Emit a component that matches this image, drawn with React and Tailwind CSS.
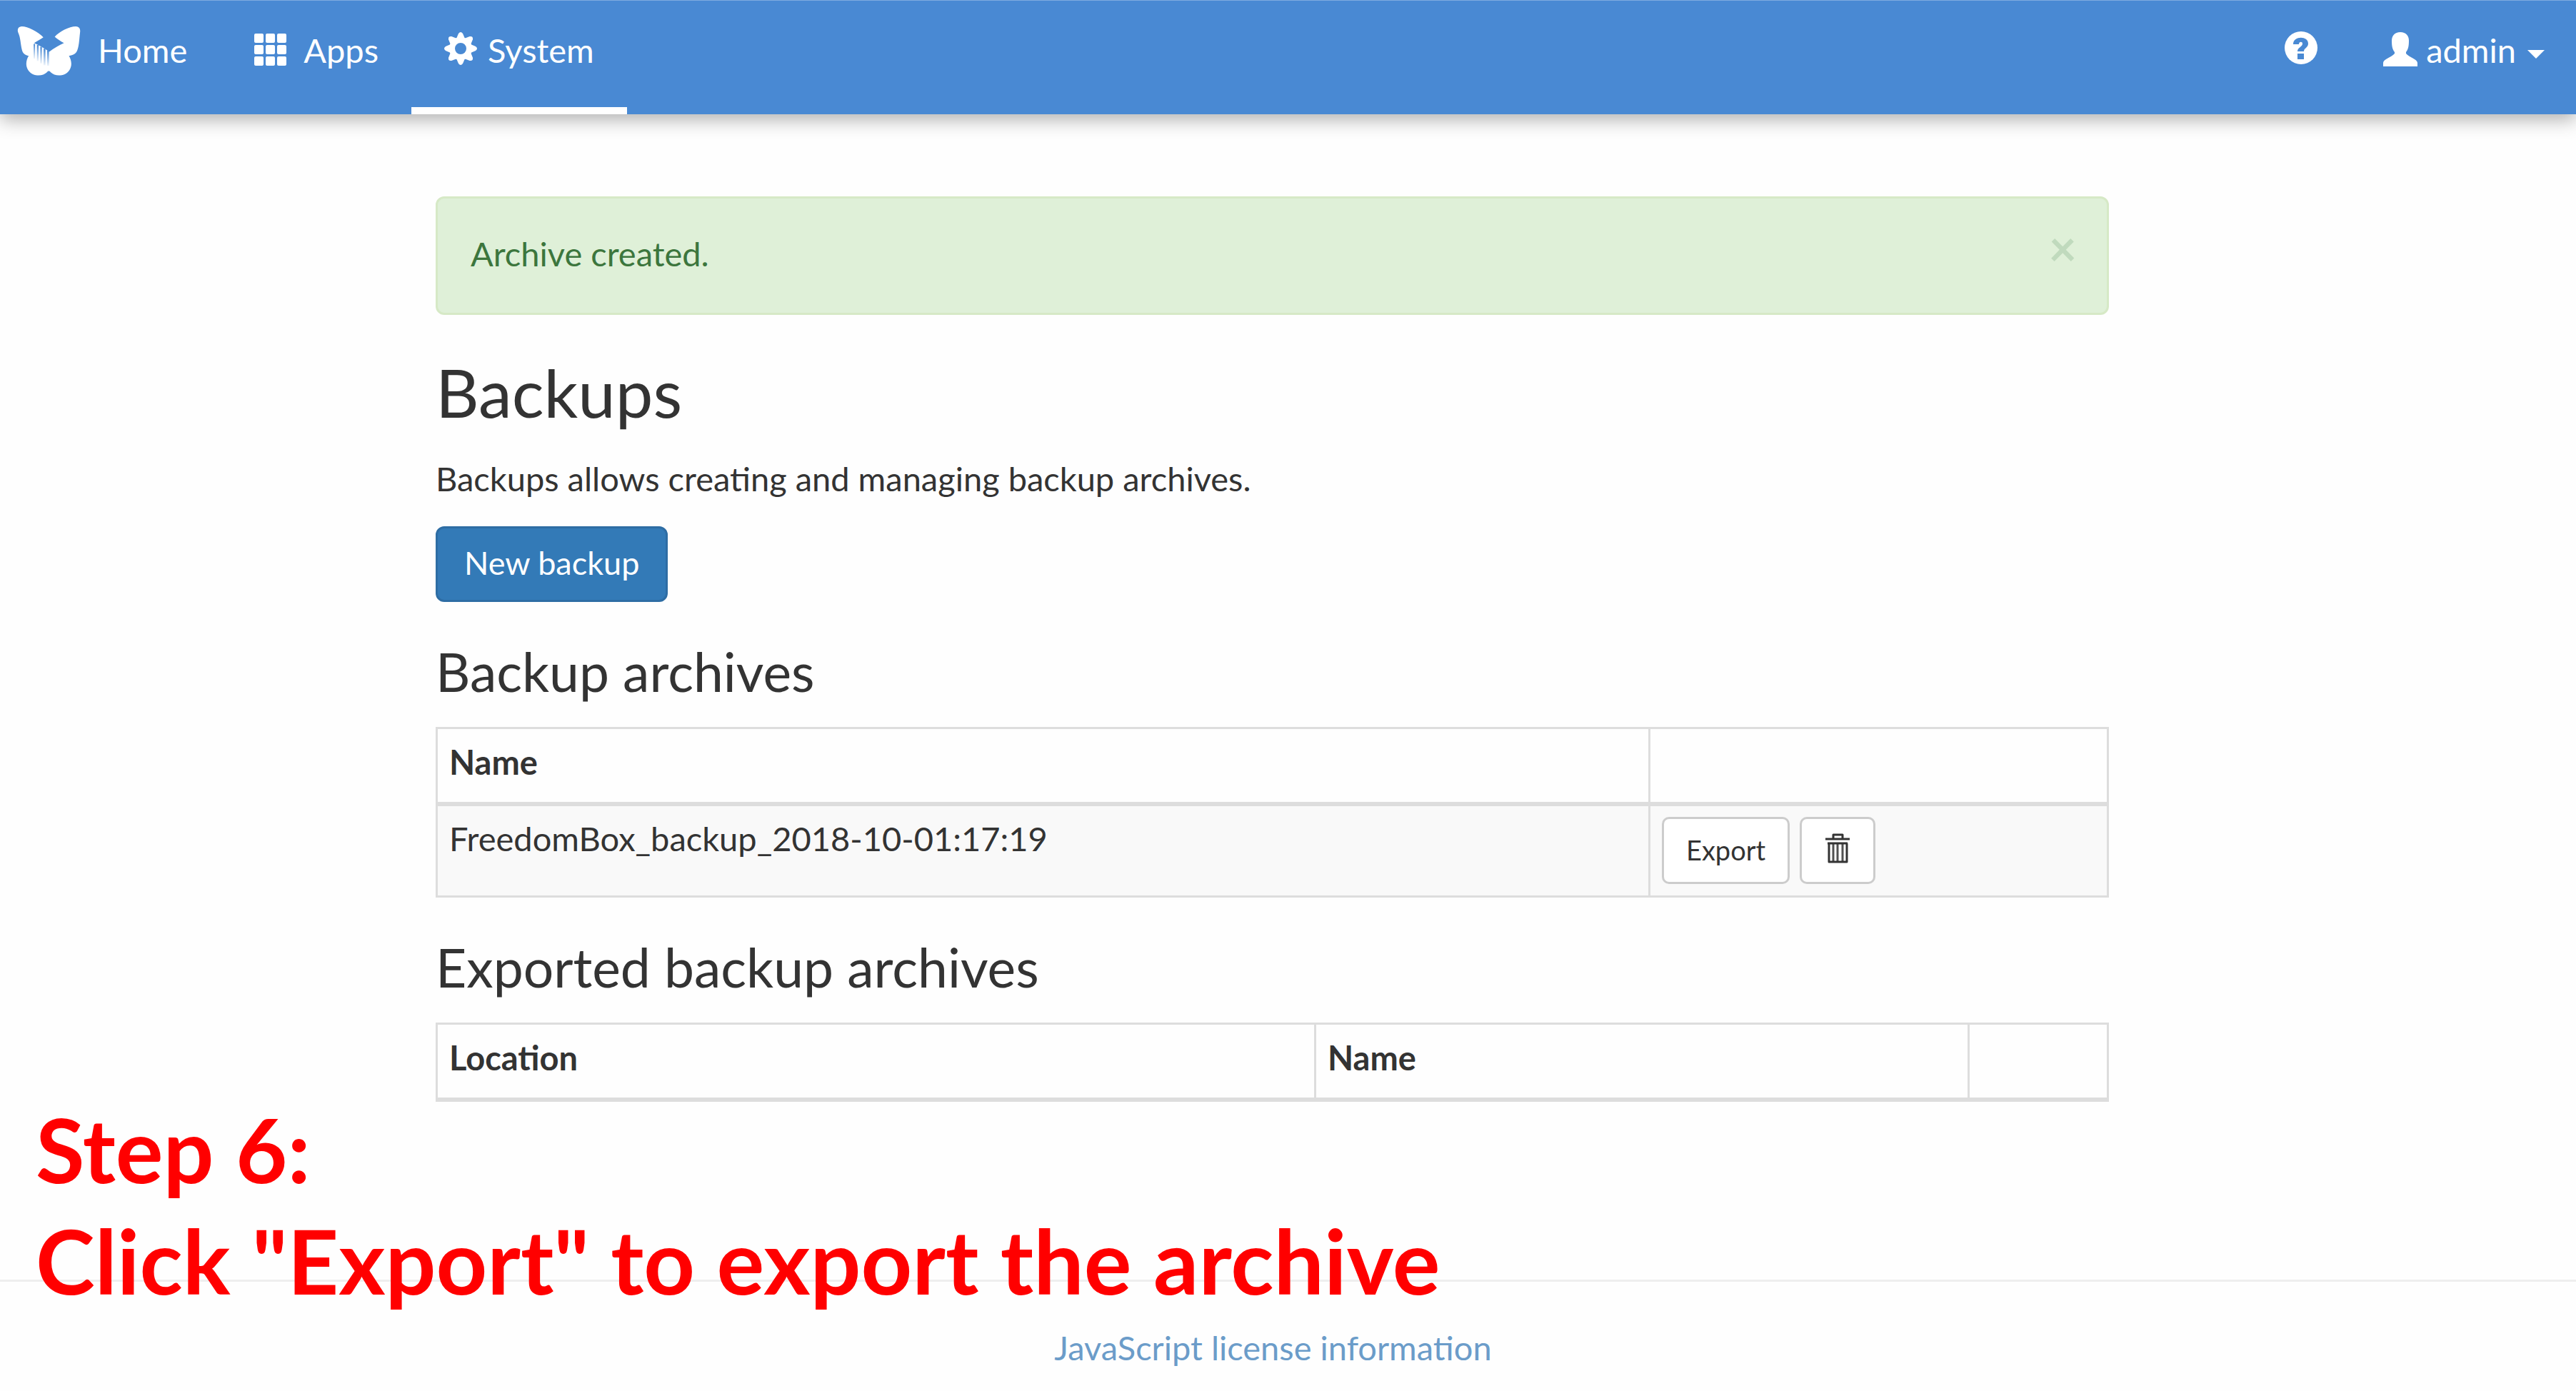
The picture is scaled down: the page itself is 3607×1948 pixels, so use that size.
import React from "react";

function Logo() {
  return (
    <svg viewBox="43 42 267 208" className="h-[69px] w-[89px] shrink-0" aria-hidden="true">
      <defs>
        <linearGradient id="wing-line" x1="0" y1="0" x2="0" y2="1">
          <stop offset="0" stopColor="#4989d3" stopOpacity="1" />
          <stop offset="1" stopColor="#4989d3" stopOpacity=".1" />
        </linearGradient>
      </defs>
      <path
        fill="#fff"
        d="M62 42C88 42 130 64 153 88C142 96 126 104 114 112C128 118 158 134 178 149C196 134 220 122 240 112C228 106 212 96 201 86C220 64 262 42 290 42C304 43 310 52 308 66C304 100 304 130 293 150C286 160 274 164 261 166C272 184 276 208 262 228C246 252 204 256 184 236C180 229 172 229 168 236C148 256 106 252 90 228C76 208 80 184 91 166C74 162 66 154 63 142C56 116 58 92 46 66C42 52 48 43 62 42Z"
      />
      <g fill="url(#wing-line)">
        <rect x="112" y="116" width="6" height="62" />
        <rect x="126" y="120" width="7" height="68" />
        <rect x="140" y="128" width="7" height="70" />
        <rect x="154" y="136" width="8" height="70" />
        <rect x="169" y="144" width="8" height="64" />
      </g>
    </svg>
  );
}

function GridIcon() {
  return (
    <svg viewBox="0 0 45 45" className="mt-[10px] h-[45px] w-[45px] shrink-0" fill="#fff" aria-hidden="true">
      {[0, 16, 32].map((y) => [0, 16, 32].map((x) => <rect key={x + "-" + y} x={x} y={y} width="13" height="13" rx="2" />))}
    </svg>
  );
}

function GearIcon() {
  return (
    <svg viewBox="0 0 46 46" className="mt-[8px] h-[46px] w-[46px] shrink-0" aria-hidden="true">
      <g fill="#fff">
        {[0, 45, 90, 135, 180, 225, 270, 315].map((a) => (
          <path key={a} d="M17 9L20 2Q23-2 26 2L29 9Z" transform={`rotate(${a} 23 23)`} />
        ))}
      </g>
      <circle cx="23" cy="23" r="12" fill="none" stroke="#fff" strokeWidth="8" />
    </svg>
  );
}

function HelpIcon() {
  return (
    <svg viewBox="0 0 46 46" className="h-[46px] w-[46px]" aria-hidden="true">
      <circle cx="23" cy="23" r="23" fill="#fff" />
      <path d="M12 18C12 6 33 6 33 17C33 23 27 23 27 28H18C18 22 25 22 25 17C25 14 20 14 20 18Z" fill="#4989d3" />
      <rect x="18" y="31" width="9" height="8" fill="#4989d3" />
    </svg>
  );
}

function UserIcon() {
  return (
    <svg viewBox="0 0 48 48" className="mt-[8px] h-[48px] w-[48px] shrink-0" fill="#fff" aria-hidden="true">
      <path d="M24 0C32 0 36 5 36 12C36 20 35 24 32 28V30C36 35 48 38 48 43V48H0V43C0 38 12 35 16 30V28C13 24 12 20 12 12C12 5 16 0 24 0Z" />
    </svg>
  );
}

function TrashIcon() {
  return (
    <svg viewBox="0 0 34 42" className="mb-[6px] h-[42px] w-[34px]" fill="none" stroke="#333" aria-hidden="true">
      <path d="M0 8H34" strokeWidth="3" />
      <path d="M11 8V2H24V8" strokeWidth="3" strokeLinejoin="round" />
      <path d="M3 14H31" strokeWidth="3" />
      <path d="M5 14V40H30V14" strokeWidth="3" strokeLinejoin="round" />
      <path d="M11 14V40M17 14V40M24 14V40" strokeWidth="3" opacity=".85" />
    </svg>
  );
}

const table = "w-full table-fixed border-collapse";
const th = "h-[106px] border-3 border-b-6 border-[#ddd] px-[16px] pb-[8px] text-left font-bold";
const td = "h-[130px] border-3 border-[#ddd] px-[16px] pt-[12px] align-top";
const h2 = "text-[75px] leading-[82px]";
const smallButton = "flex h-[94px] items-center rounded-[10px] border-[3px] border-[#ccc] bg-white text-[38px]";

export default function App() {
  return (
    <div className="relative flex min-h-screen flex-col bg-[#fefefe] font-['Lato',sans-serif] text-[47px] leading-[67px] text-[#333]">
      <header className="flex h-[160px] justify-between border-t border-[#7fabe0] bg-[#4989d3] text-white shadow-[0_8px_24px_rgba(0,0,0,0.3)]">
        <nav className="flex" aria-label="Main">
          <a href="#home" className="flex items-start gap-[24px] pl-[24px] pr-[48px] pt-[36px]"><Logo />Home</a>
          <a href="#apps" className="flex items-start gap-[24px] px-[46px] pt-[36px]"><GridIcon />Apps</a>
          <a href="#system" className="flex items-start gap-[15px] border-b-[10px] border-white px-[46px] pt-[36px]"><GearIcon />System</a>
        </nav>
        <div className="flex">
          <a href="#help" aria-label="Help" className="px-[46px] pt-[43px]"><HelpIcon /></a>
          <button type="button" className="flex items-start gap-[12px] pl-[46px] pr-[44px] pt-[36px]">
            <UserIcon />
            admin
            <svg viewBox="0 0 24 12" className="ml-[4px] mt-[33px] h-[12px] w-[24px]" fill="#fff" aria-hidden="true"><path d="M0 0H24L12 12Z" /></svg>
          </button>
        </div>
      </header>

      <main className="ml-[610px] mr-[654px] mt-[115px]">
        <div role="status" className="flex h-[166px] items-start justify-between rounded-[12px] border-[3px] border-[#d6e9c6] bg-[#dff0d8] pl-[46px] pr-[42px] pt-[44px] text-[#3c763d]">
          <span>Archive created.</span>
          <button type="button" aria-label="Close" className="text-[68px] leading-[50px] font-bold text-[#c0dabd]">×</button>
        </div>
        <h1 className="mt-[56px] text-[94px] leading-[104px]">Backups</h1>
        <p className="mt-[36px]">Backups allows creating and managing backup archives.</p>
        <button type="button" className="mt-[33px] flex h-[106px] items-center rounded-[12px] border-[3px] border-[#2e6da4] bg-[#337ab7] px-[37px] pb-[4px] text-[45px] text-white">New backup</button>

        <h2 className={`${h2} mt-[56px]`}>Backup archives</h2>
        <table className={`${table} mt-[37px]`}>
          <colgroup><col /><col className="w-[642px]" /></colgroup>
          <thead>
            <tr><th className={th}>Name</th><th className={th} aria-label="Actions" /></tr>
          </thead>
          <tbody>
            <tr className="bg-[#f9f9f9]">
              <td className={td}>FreedomBox_backup_2018-10-01:17:19</td>
              <td className={td}>
                <div className="flex gap-[14px] pt-[3px]">
                  <button type="button" className={`${smallButton} px-[31px]`}>Export</button>
                  <button type="button" aria-label="Delete" className={`${smallButton} px-[33px]`}><TrashIcon /></button>
                </div>
              </td>
            </tr>
          </tbody>
        </table>

        <h2 className={`${h2} mt-[56px]`}>Exported backup archives</h2>
        <table className={`${table} mt-[37px]`}>
          <colgroup><col /><col className="w-[915px]" /><col className="w-[195px]" /></colgroup>
          <thead>
            <tr><th className={th}>Location</th><th className={th}>Name</th><th className={th} aria-label="Actions" /></tr>
          </thead>
        </table>
      </main>

      <footer className="mt-auto border-t-[3px] border-[#eee] pb-[27px] pr-[42px] pt-[59px] text-center">
        <a href="#licenses" className="text-[#6b9cc9]">JavaScript license information</a>
      </footer>

      <p className="absolute bottom-[105px] left-[50px] text-[125px] font-bold leading-[156px] text-[#f00]">
        Step 6:<br />Click "Export" to export the archive
      </p>
    </div>
  );
}
